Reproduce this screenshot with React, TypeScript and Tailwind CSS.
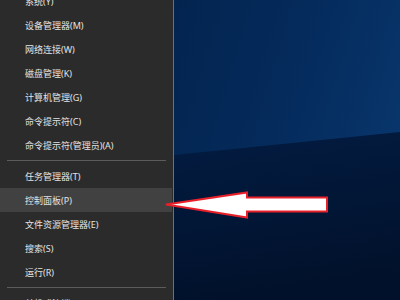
import { ChevronRight } from "lucide-react";

const groupA = [
  "系统(Y)",
  "设备管理器(M)",
  "网络连接(W)",
  "磁盘管理(K)",
  "计算机管理(G)",
  "命令提示符(C)",
  "命令提示符(管理员)(A)",
];

const groupB = [
  "任务管理器(T)",
  "控制面板(P)",
  "文件资源管理器(E)",
  "搜索(S)",
  "运行(R)",
];

function MenuItem({ label, active, sub }: { label: string; active?: boolean; sub?: boolean }) {
  return (
    <div
      className={`h-[24px] shrink-0 mr-px flex items-center justify-between pl-[25px] pr-[8px] ${
        active ? "bg-[#414141]" : ""
      }`}
    >
      <span>{label}</span>
      {sub && <ChevronRight className="w-[9px] h-[9px] text-[#cfcfcf]" strokeWidth={2} />}
    </div>
  );
}

function Separator() {
  return (
    <div className="h-[7px] shrink-0 flex items-center px-[7px]">
      <div className="h-px w-full bg-[#5c5c5c]" />
    </div>
  );
}

function Wallpaper() {
  return (
    <svg viewBox="0 0 226 300" preserveAspectRatio="none" className="w-full h-full block">
      <defs>
        <linearGradient id="up" x1="0" y1="0" x2="1" y2="0.4">
          <stop offset="0" stopColor="#03244f" />
          <stop offset="0.6" stopColor="#052c5e" />
          <stop offset="1" stopColor="#08356b" />
        </linearGradient>
        <linearGradient id="low" x1="0" y1="0" x2="0.2" y2="1">
          <stop offset="0" stopColor="#031c42" />
          <stop offset="1" stopColor="#01112b" />
        </linearGradient>
      </defs>
      <rect x="0" y="0" width="226" height="300" fill="url(#up)" />
      <polygon points="0,155 226,132 226,300 0,300" fill="url(#low)" />
    </svg>
  );
}

export default function App() {
  return (
    <div
      className="relative w-[400px] h-[300px] overflow-hidden flex bg-[#02122e]"
      style={{ fontFamily: '"Noto Sans", "Noto Sans CJK SC", sans-serif' }}
    >
      {/* Win+X menu */}
      <div className="w-[174px] h-full shrink-0 bg-[#2b2b2b] border-r border-[#707070] text-[#e4e4e4] text-[9px] leading-none flex flex-col">
        <div className="-mt-[11px] flex flex-col">
          {groupA.map((l) => (
            <MenuItem key={l} label={l} />
          ))}
          <Separator />
          {groupB.map((l) => (
            <MenuItem key={l} label={l} active={l === "控制面板(P)"} />
          ))}
          <Separator />
          <MenuItem label="关机或注销(U)" sub />
        </div>
      </div>

      {/* Desktop */}
      <div className="flex-1 h-full">
        <Wallpaper />
      </div>

      {/* Red arrow pointing at 控制面板 */}
      <svg className="absolute left-0 top-0 pointer-events-none" width="400" height="300" viewBox="0 0 400 300">
        <polygon
          points="166,204.5 247,192.5 247,197.5 327,197.5 327,211.5 247,211.5 247,217.5"
          fill="#ffffff"
          stroke="#e8202a"
          strokeWidth="2"
          strokeLinejoin="miter"
        />
      </svg>
    </div>
  );
}
